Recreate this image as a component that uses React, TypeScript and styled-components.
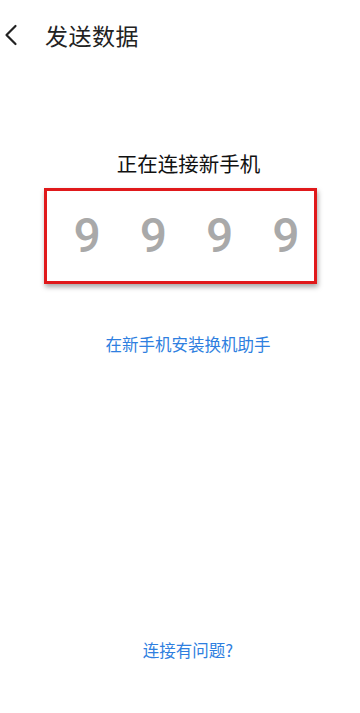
import React from 'react';
import styled, { createGlobalStyle } from 'styled-components';

const GlobalStyle = createGlobalStyle`
  html, body {
    margin: 0;
    padding: 0;
    background: #ffffff;
  }
  body {
    font-family: 'Noto Sans CJK SC', Roboto, sans-serif;
  }
`;

const Page = styled.div`
  display: flex;
  flex-direction: column;
  width: 360px;
  height: 713px;
  background: #ffffff;
`;

const Header = styled.header`
  display: flex;
  align-items: center;
  height: 70px;
  padding: 0;
  gap: 23px;
`;

const BackButton = styled.button`
  display: flex;
  align-items: center;
  justify-content: center;
  width: 22px;
  height: 30px;
  padding: 0;
  border: none;
  background: none;
`;

const Title = styled.h1`
  margin: 0;
  font-size: 23px;
  font-weight: 400;
  color: #222222;
  letter-spacing: 0.5px;
`;

const Body = styled.main`
  display: flex;
  flex-direction: column;
  align-items: center;
  flex: 1;
`;

const Status = styled.h2`
  margin: 78px 0 0 17px;
  font-size: 20.5px;
  font-weight: 400;
  color: #111111;
  line-height: 30px;
`;

const CodeBox = styled.div`
  display: flex;
  justify-content: space-between;
  align-items: center;
  box-sizing: border-box;
  width: 273px;
  height: 96px;
  margin-top: 10px;
  padding: 0 14px 0 27px;
  border: 3px solid #e0191b;
  box-shadow: 1px 3px 5px rgba(0, 0, 0, 0.35);
`;

const Digit = styled.span`
  font-family: Roboto, 'Noto Sans', sans-serif;
  font-size: 48px;
  font-weight: 500;
  color: #a9a9a9;
  line-height: 1;
`;

const Link = styled.a<{ $top: number }>`
  margin: ${(p) => p.$top}px 0 0 16px;
  font-size: 16.5px;
  color: #2f7fe0;
  text-decoration: none;
`;

export default function App() {
  return (
    <Page>
      <GlobalStyle />
      <Header>
        <BackButton aria-label="返回">
          <svg width="16" height="22" viewBox="0 0 16 22" fill="none">
            <path d="M12.5 2 L3.5 11 L12.5 20" stroke="#222" strokeWidth="2.2" strokeLinecap="round" strokeLinejoin="round" />
          </svg>
        </BackButton>
        <Title>发送数据</Title>
      </Header>
      <Body>
        <Status>正在连接新手机</Status>
        <CodeBox>
          {['9', '9', '9', '9'].map((d, i) => (
            <Digit key={i}>{d}</Digit>
          ))}
        </CodeBox>
        <Link $top={48}>在新手机安装换机助手</Link>
        <Link $top={282}>连接有问题?</Link>
      </Body>
    </Page>
  );
}
